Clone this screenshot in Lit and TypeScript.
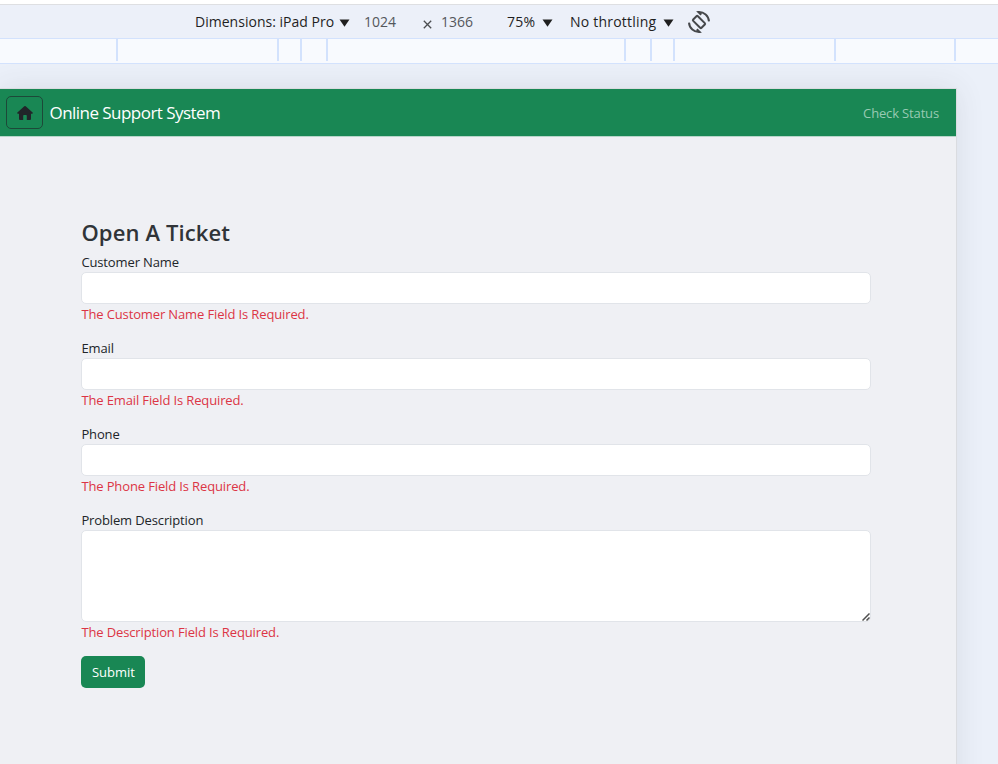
import { LitElement, html, css, svg } from "lit";
import { customElement } from "lit/decorators.js";

interface Field {
  id: string;
  label: string;
  error: string;
  multiline?: boolean;
}

const FIELDS: Field[] = [
  { id: "name", label: "Customer Name", error: "The Customer Name Field Is Required." },
  { id: "email", label: "Email", error: "The Email Field Is Required." },
  { id: "phone", label: "Phone", error: "The Phone Field Is Required." },
  { id: "description", label: "Problem Description", error: "The Description Field Is Required.", multiline: true },
];

// Widths of the ruler segments; each one ends in a 2px tick.
const SEGMENTS = [118, 161, 23, 26, 298, 26, 23, 161, 120];

@customElement("device-toolbar")
export class DeviceToolbar extends LitElement {
  static styles = css`
    :host {
      display: block;
      font: 14px/20px "Open Sans", "Noto Sans", sans-serif;
      color: #1f1f1f;
    }
    .edge {
      height: 4px;
      background: #fff;
      border-bottom: 1px solid #dedfe2;
    }
    .bar {
      display: flex;
      align-items: center;
      height: 33px;
      padding-left: 195px;
      background: #ecf0f9;
      border-bottom: 1px solid #d3e2fd;
      white-space: nowrap;
    }
    .item {
      flex: none;
    }
    .device { width: 144px; letter-spacing: 0.02px; }
    .width { width: 59px; margin-left: 14px; color: #54575b; }
    .times { width: 9px; height: 9px; margin-top: 5px; }
    .height { width: 65px; margin-left: 9px; color: #54575b; }
    .zoom { width: 35px; margin-left: 1px; letter-spacing: 0.2px; }
    .throttle { width: 93px; margin-left: 17px; letter-spacing: 0.22px; }
    .arrow { width: 11px; height: 8px; margin-top: 3px; }
    .rotate { width: 24px; height: 24px; margin-left: 13px; }
    .ruler {
      display: flex;
      height: 24px;
      background: #f8fafe;
      border-bottom: 1px solid #d3e2fd;
    }
    .segment {
      flex: none;
      box-sizing: border-box;
      height: 22px;
      border-right: 2px solid #d3e2fd;
    }
  `;

  private arrow() {
    return html`<svg class="item arrow" viewBox="0 0 11 8">${svg`<path d="M.5.5h10L5.5 7.8z" fill="#1f1f1f" />`}</svg>`;
  }

  render() {
    return html`
      <div class="edge"></div>
      <div class="bar">
        <span class="item device">Dimensions: iPad Pro</span>${this.arrow()}
        <span class="item width">1024</span>
        <svg class="item times" viewBox="0 0 9 9">
          <path d="M.8.8l7.4 7.4M8.2.8L.8 8.2" stroke="#4b4d50" stroke-width="1.3" />
        </svg>
        <span class="item height">1366</span>
        <span class="item zoom">75%</span>${this.arrow()}
        <span class="item throttle">No throttling</span>${this.arrow()}
        <svg class="item rotate" viewBox="0 0 24 24" fill="none" stroke="#46484b" stroke-width="2">
          <rect x="8.7" y="6.1" width="6.6" height="11.8" rx="1" transform="rotate(-45 12 12)" />
          <path d="M2 12.6A10 10 0 0 0 12.6 22L9.800 19.200M22 11.400A10 10 0 0 0 11.400 2L14.200 4.800" />
        </svg>
      </div>
      <div class="ruler">
        ${SEGMENTS.map((w) => html`<div class="segment" style="width:${w}px"></div>`)}
      </div>
    `;
  }
}

@customElement("ticket-form")
export class TicketForm extends LitElement {
  static styles = css`
    :host {
      display: block;
      font: 13px/20px "Open Sans", "Noto Sans", sans-serif;
      color: #212529;
    }
    h1 {
      margin: 0 0 4px;
      font-size: 22px;
      line-height: 32px;
      font-weight: 600;
      letter-spacing: 0.13px;
      color: #303438;
    }
    .field {
      margin-bottom: 14px;
    }
    label, .error {
      display: block;
      height: 20px;
      letter-spacing: -0.13px;
      white-space: nowrap;
    }
    .error {
      color: #dc3545;
    }
    .control {
      display: block;
      position: relative;
    }
    input, textarea {
      display: block;
      box-sizing: border-box;
      width: 100%;
      height: 32px;
      margin: 0;
      padding: 5px 10px;
      border: 1px solid #e1e4e9;
      border-radius: 5px;
      background: #fff;
      outline: none;
      font: inherit;
      resize: none;
    }
    textarea {
      height: 92px;
    }
    .grip {
      position: absolute;
      right: 1px;
      bottom: 1px;
      width: 8px;
      height: 8px;
    }
    button {
      display: block;
      box-sizing: border-box;
      width: 64px;
      height: 32px;
      padding: 0;
      border: 0;
      border-radius: 5px;
      background: #198754;
      color: #fff;
      font: inherit;
      letter-spacing: 0;
    }
  `;

  private control(f: Field) {
    return f.multiline
      ? html`<textarea id=${f.id}></textarea>
          <svg class="grip" viewBox="0 0 8 8">
            <path d="M.5 7.5l7-7M4.5 7.5l3-3" stroke="#505050" stroke-width="1.5" />
          </svg>`
      : html`<input id=${f.id} />`;
  }

  render() {
    return html`
      <h1>Open A Ticket</h1>
      ${FIELDS.map(
        (f) => html`<div class="field">
          <label for=${f.id}>${f.label}</label>
          <div class="control">${this.control(f)}</div>
          <span class="error">${f.error}</span>
        </div>`
      )}
      <button>Submit</button>
    `;
  }
}

@customElement("app-root")
export class AppRoot extends LitElement {
  static styles = css`
    :host {
      display: block;
      height: 764px;
      overflow: hidden;
      background: #ebf0f9;
      font-family: "Open Sans", "Noto Sans", sans-serif;
    }
    .stage {
      height: 700px;
      padding-top: 25px;
      box-sizing: border-box;
      overflow: hidden;
    }
    .page {
      width: 956px;
      height: 720px;
      background: #eff0f4;
      box-shadow: 0 0 0 1px #dadce0, 0 0 28px rgba(60, 64, 67, 0.11);
    }
    .nav {
      display: flex;
      align-items: center;
      box-sizing: border-box;
      height: 48px;
      padding: 0 17px 0 6px;
      background: #198754;
      border-bottom: 1px solid #b7d6ca;
      white-space: nowrap;
    }
    .home {
      display: flex;
      align-items: center;
      justify-content: center;
      box-sizing: border-box;
      width: 37px;
      height: 33px;
      border: 1px solid #1d4939;
      border-radius: 5px;
    }
    .home svg {
      width: 16px;
      height: 16px;
    }
    .brand {
      flex: 1;
      margin-left: 6.5px;
      font-size: 17px;
      line-height: 24px;
      letter-spacing: -0.54px;
      color: #fff;
    }
    .link {
      font-size: 13px;
      line-height: 20px;
      letter-spacing: -0.15px;
      color: #98cab3;
    }
    ticket-form {
      margin: 79px 85px 0 81.4px;
    }
  `;

  render() {
    return html`
      <device-toolbar></device-toolbar>
      <div class="stage">
        <div class="page">
          <div class="nav">
            <span class="home">
              <svg viewBox="0 0 16 16" fill="#212529">
                <path d="M7.3 1.3a1 1 0 0 1 1.4 0l6.9 6.2c.5.5.2 1.3-.5 1.3H14v5.1a1 1 0 0 1-1 1H9.8v-4.1a.7.7 0 0 0-.7-.7H6.9a.7.7 0 0 0-.7.7v4.1H3a1 1 0 0 1-1-1V8.8H.9C.2 8.8 0 8 .4 7.5z" />
              </svg>
            </span>
            <span class="brand">Online Support System</span>
            <span class="link">Check Status</span>
          </div>
          <ticket-form></ticket-form>
        </div>
      </div>
    `;
  }
}
